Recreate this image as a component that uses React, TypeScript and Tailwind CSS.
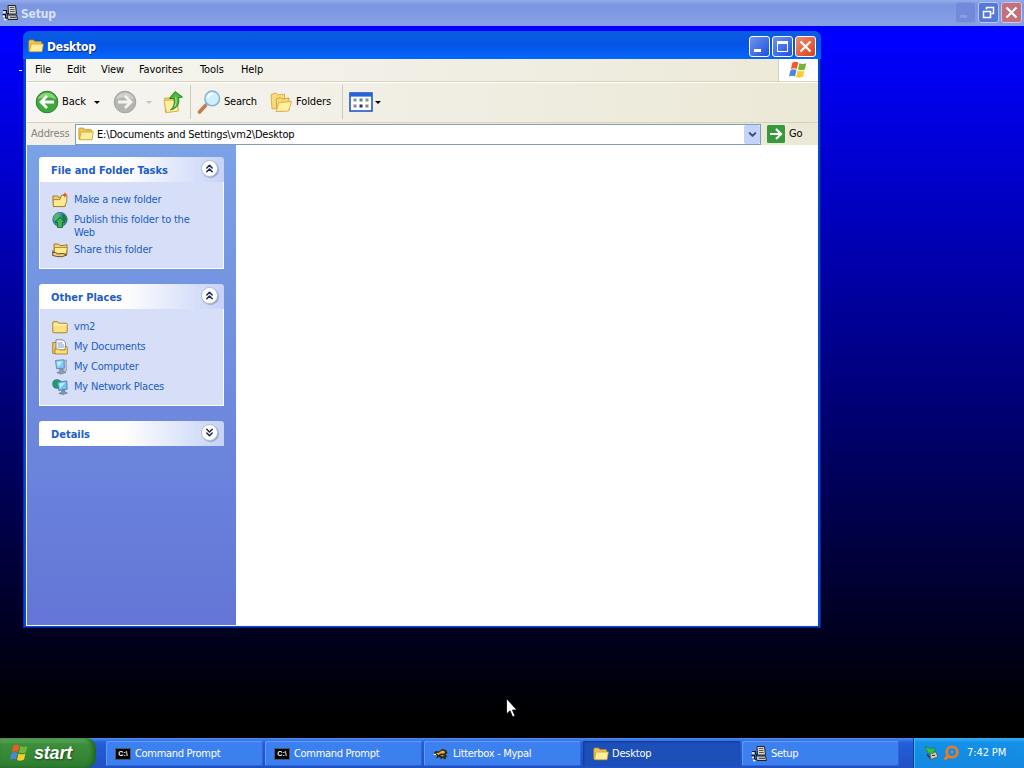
import type { ReactNode } from "react";
import { ChevronDown, ChevronsDown, ChevronsUp } from "lucide-react";

/* ---------- icons ---------- */

function FolderIcon({ className = "w-4 h-4" }: { className?: string }) {
    return (
        <svg viewBox="0 0 16 16" className={className}>
            <path d="M0.8 3.2Q0.8 2 2 2H5.5L7 3.6H12.5Q13.8 3.6 13.8 5V13.6H2Q0.8 13.6 0.8 12.5Z" fill="#f0c552" stroke="#b98a1c" strokeWidth="0.7" />
            <path d="M3 6H15.4L14 13.7H1.6Z" fill="#fdee9c" stroke="#c99a2c" strokeWidth="0.7" />
        </svg>
    );
}

function ClosedFolderIcon() {
    return (
        <svg viewBox="0 0 16 16" className="w-4 h-4">
            <path d="M0.8 4Q0.8 2.6 2 2.6H5.5L7 4.2H14Q15.2 4.2 15.2 5.5V12.6Q15.2 13.8 14 13.8H2Q0.8 13.8 0.8 12.6Z" fill="#fbe27c" stroke="#a37a1c" strokeWidth="0.9" />
            <path d="M1.4 6H14.6" stroke="#fff7c6" strokeWidth="1.2" />
        </svg>
    );
}

function WindowsFlag({ className = "w-5 h-5" }: { className?: string }) {
    return (
        <svg viewBox="0 0 20 18" className={className}>
            <path d="M3.4 1.8Q6.2 0 9.4 1.6L7.8 8Q4.8 6.6 1.8 8.2Z" fill="#ee5a2a" />
            <path d="M10.4 2.2Q13.4 3.8 17.4 2.2L15.8 8.4Q12.4 10 8.9 8.4Z" fill="#76b53c" />
            <path d="M1.5 9.2Q4.4 7.6 7.5 9.1L6 15.4Q3 14 0 15.6Z" fill="#4d86e0" />
            <path d="M8.6 9.5Q12 11.2 15.5 9.5L14 15.8Q10.4 17.4 7 15.9Z" fill="#f7cd2c" />
        </svg>
    );
}

function SetupIcon() {
    return (
        <svg viewBox="0 0 16 16" className="w-4 h-4 shrink-0">
            <path d="M6 0.5H13.5L14.5 9H6.5Z" fill="#d8d8d0" stroke="#222" />
            <path d="M7.8 2.5H12.2M7.8 4.5H12.5M8 6.5H12.7" stroke="#555" />
            <path d="M5 10H14.5L15.5 14.5H6Z" fill="#c8c8c8" stroke="#222" />
            <path d="M8 12.3H14" stroke="#333" />
            <path d="M1 5.5H4.5V8L6 9.5M0.5 9.5H3.5V12.5L5 14" fill="none" stroke="#111" strokeWidth="1.2" />
            <path d="M1 7H3.5M1 11.5H3M2 14.5H4.5" stroke="#fff" strokeWidth="1.3" />
        </svg>
    );
}

function CmdIcon() {
    return (
        <span className="flex w-4 h-3 shrink-0 items-center justify-center border border-[#4a5878] bg-black font-['Liberation_Sans'] text-[7px] leading-none font-bold tracking-normal text-white">
            C:\
        </span>
    );
}

function MypalIcon() {
    return (
        <svg viewBox="0 0 16 16" className="w-4 h-4 shrink-0">
            <path d="M0.5 7L3 5L6 5.5L9 3L13 4L14.5 7L12.5 8.5L14.5 11L12.5 11L13 13.5L9.5 12L8 13.5L7 11L3 12.5L4.5 9.5Z" fill="#2f2710" />
            <path d="M3 7L6 6.8L9 4.6L12 5.4L11.5 7.5H7.5L5.5 9Z" fill="#e4b83c" />
            <path d="M7 9L11.5 9.2L9.5 10.8Z" fill="#c8902c" />
            <path d="M0.5 8.5L3 8.2" stroke="#fff" />
        </svg>
    );
}

function NewFolderIcon() {
    return (
        <svg viewBox="0 0 16 16" className="w-4 h-4">
            <path d="M0.8 4H5.5L7 5.3H13V14.5H1.5Z" fill="#f3cf62" stroke="#8e641a" strokeWidth="0.8" />
            <path d="M9.5 3.2L15 4L14.6 10L12.6 14.6H1.3L1.2 7.6H8Z" fill="#fdea90" stroke="#9c7020" strokeWidth="0.8" />
            <path d="M13 0.3L13.8 2.1L15.9 2.9L13.8 3.8L13 5.8L12 3.8L10 2.9L12 2.1Z" fill="#e8532c" />
        </svg>
    );
}

function PublishIcon() {
    return (
        <svg viewBox="0 0 16 16" className="w-4 h-4">
            <circle cx="8" cy="7.5" r="7.2" fill="#3a92a4" stroke="#245f78" strokeWidth="0.7" />
            <path d="M2 4Q5 0.5 8 1.2L7 5L4 8.5L1.2 7.5Z" fill="#4fb86a" />
            <path d="M10 1.5Q14.5 3 14.8 8L12 10L10 6Z" fill="#1f7a45" />
            <path d="M8 5.5L13 10.4H10.4V15.6H5.6V10.4H3Z" fill="#3dbb50" stroke="#10562a" strokeWidth="0.8" />
        </svg>
    );
}

function ShareIcon() {
    return (
        <svg viewBox="0 0 16 16" className="w-4 h-4">
            <path d="M2 2H6.5L8 3.5H12L15 2.5V12H2Z" fill="#f5d264" stroke="#8e641a" strokeWidth="0.8" />
            <path d="M2.5 5.5H15.3L14 12H2.5Z" fill="#fdea90" stroke="#9c7020" strokeWidth="0.7" />
            <path d="M0.8 8.5V14M0.8 10.5Q4 10 6 12L11 11.5L14.8 13Q10 15.5 6 14.6L0.8 13.6" fill="#f0cf8a" stroke="#5b4218" strokeWidth="0.9" />
        </svg>
    );
}

function DocumentsIcon() {
    return (
        <svg viewBox="0 0 16 16" className="w-4 h-4">
            <path d="M0.7 3.5H4.5V14.5H0.7Z" fill="#f2c75a" stroke="#a0741e" strokeWidth="0.8" />
            <path d="M4 0.8H11L13.5 3.5V11H4Z" fill="#fff" stroke="#5f6f94" strokeWidth="0.8" />
            <path d="M5.5 4H10.5M5.5 6H12M5.5 8H12" stroke="#6a8fcf" strokeWidth="0.9" />
            <path d="M3 10H6.5L7.5 11H13.2V7L15.3 8V15H3Z" fill="#fbe07c" stroke="#a0741e" strokeWidth="0.8" />
        </svg>
    );
}

function ComputerIcon() {
    return (
        <svg viewBox="0 0 16 16" className="w-4 h-4">
            <path d="M10.5 1.5L14.5 1V12L11 14Z" fill="#b9c2d4" stroke="#7f8da8" strokeWidth="0.6" />
            <path d="M3.5 1.5L12 0.8L12.3 9L4.6 9.8Z" fill="#7fd0f4" stroke="#5f86b4" strokeWidth="0.9" />
            <path d="M5 3L10.8 2.3L6 7.8Z" fill="#c6effd" />
            <path d="M7.5 10L10.5 9.8L11 12L14 13.5L8.5 15.2L4.8 13.6L7.8 12.2Z" fill="#8f9bb2" stroke="#63708c" strokeWidth="0.5" />
        </svg>
    );
}

function NetworkIcon() {
    return (
        <svg viewBox="0 0 16 16" className="w-4 h-4">
            <circle cx="5" cy="5" r="4.8" fill="#2584b8" />
            <path d="M0.5 4Q3 -0.5 7 1L5.5 4L6 7L3.5 9Z" fill="#2c9a4b" />
            <path d="M5.5 3.2L14.8 2L15.2 10.2L6.8 11.4Z" fill="#6cc6f2" stroke="#5678a8" strokeWidth="0.9" />
            <path d="M7.2 4.4L13.3 3.6L8 9.4Z" fill="#bdeafc" />
            <path d="M9.5 11.2L12.5 11L13 13L15.5 14L11 15.6L6.8 14.4L9.8 13Z" fill="#8792aa" stroke="#59657f" strokeWidth="0.5" />
        </svg>
    );
}

function RoundArrow({ back, disabled }: { back?: boolean; disabled?: boolean }) {
    return (
        <svg viewBox="0 0 24 24" className="w-6 h-6 shrink-0">
            <circle cx="12" cy="12" r="10.8" fill={disabled ? "#b4b4b0" : "#3fa83a"} stroke={disabled ? "#a3a39f" : "#2c8230"} />
            <path d="M3 9.5A9.4 9.4 0 0 1 21 9.5Q12 5 3 9.5Z" fill={disabled ? "#cfcfcb" : "#8cd27e"} />
            <path
                d={back ? "M19 12H6.5M12 6L6 12L12 18" : "M5 12H17.5M12 6L18 12L12 18"}
                fill="none"
                stroke={disabled ? "#f3f3f0" : "#fff"}
                strokeWidth="2.8"
            />
        </svg>
    );
}

function UpFolderIcon() {
    return (
        <svg viewBox="0 0 22 24" className="w-[22px] h-6">
            <path d="M2.5 8H8L9.5 6H16V21L3.5 22.5Z" fill="#f2cf62" stroke="#d0a43a" strokeWidth="0.8" />
            <path d="M2 10.5L14 10L16.5 21L4.5 22.5Z" fill="#fdf0a0" stroke="#d5ad48" strokeWidth="0.8" />
            <path d="M8.5 20Q13.5 16 12 8.5H7.5L13 1.5L20.5 7L16.6 7.8Q18.5 17.5 8.5 20Z" fill="#4fb93c" stroke="#237a22" strokeWidth="0.9" />
            <path d="M13.6 7.2Q15 13 12.6 16.4" stroke="#a6e48c" strokeWidth="1.2" fill="none" />
        </svg>
    );
}

function SearchIcon() {
    return (
        <svg viewBox="0 0 24 24" className="w-6 h-6">
            <path d="M8.5 15.5L2.5 22" stroke="#c9784c" strokeWidth="3.6" strokeLinecap="round" />
            <path d="M10.5 12.8L8.5 15.2" stroke="#8fa2b8" strokeWidth="2.4" />
            <circle cx="15.2" cy="8.4" r="7.3" fill="#cdf0fb" stroke="#8db3d4" strokeWidth="1.6" />
            <path d="M11 8Q11.5 4 16 3.5" stroke="#fff" strokeWidth="1.8" fill="none" />
        </svg>
    );
}

function FoldersIcon() {
    return (
        <svg viewBox="0 0 22 22" className="w-[22px] h-[22px]">
            <path d="M1 3.5L6 2L8 4L14.5 3V16L2 18Z" fill="#f8db7c" stroke="#d8a83e" strokeWidth="0.9" />
            <path d="M6 8L10.5 6.5L12 8L19 7V19.5L7 20.5Z" fill="#f7d873" stroke="#d19e38" strokeWidth="0.9" />
            <path d="M9 11.5L21.5 10.5L18.5 20L6 20.5Z" fill="#fef1a4" stroke="#d9ad49" strokeWidth="0.9" />
        </svg>
    );
}

function ViewsIcon() {
    return (
        <svg viewBox="0 0 24 20" className="w-6 h-5">
            <rect x="1" y="1" width="22" height="18" fill="#fff" stroke="#2257c4" strokeWidth="1.6" />
            <rect x="1" y="1" width="22" height="3.6" fill="#2464d8" />
            <g fill="#7d93a6">
                <rect x="4.5" y="6.5" width="3" height="3" />
                <rect x="10.5" y="6.5" width="3" height="3" fill="#508c7a" />
                <rect x="16.5" y="6.5" width="3" height="3" />
                <rect x="4.5" y="12.5" width="3" height="3" fill="#8b7fb0" />
                <rect x="10.5" y="12.5" width="3" height="3" fill="#24364a" />
                <rect x="16.5" y="12.5" width="3" height="3" fill="#a27c6a" />
            </g>
        </svg>
    );
}

function Caret({ className = "border-t-black" }: { className?: string }) {
    return <span className={`w-0 h-0 border-x-[3px] border-x-transparent border-t-[3px] ${className}`} />;
}

/* ---------- window chrome ---------- */

function CaptionButton({ tone, children }: { tone: string; children: ReactNode }) {
    return (
        <button className={`flex w-[21px] h-[21px] items-center justify-center rounded-[3px] border ${tone}`}>
            <svg viewBox="0 0 19 19" className="w-[19px] h-[19px]" fill="none">
                {children}
            </svg>
        </button>
    );
}

const menus = [
    { label: "File", width: "w-[32px]" },
    { label: "Edit", width: "w-[34px]" },
    { label: "View", width: "w-[38px]" },
    { label: "Favorites", width: "w-[61px]" },
    { label: "Tools", width: "w-[41px]" },
    { label: "Help", width: "w-[40px]" },
];

function TaskPanel({ title, open, height, children }: { title: string; open?: boolean; height: string; children?: ReactNode }) {
    const Chevron = open ? ChevronsUp : ChevronsDown;
    return (
        <section className={`flex flex-col w-[185px] ${height}`}>
            <header className="flex h-[25px] shrink-0 items-center justify-between rounded-t-[3px] bg-linear-to-r/srgb from-white from-45% to-[#c6d3f7] pl-3 pr-[6px]">
                <h2 className="pt-[4px] text-[11px] font-bold text-[#215dc6]">{title}</h2>
                <span className="mb-[2px] flex w-[17px] h-[17px] items-center justify-center rounded-full border border-[#b4bdd2] bg-white text-[#1b2a4c] shadow-[1px_1px_1px_#9aa6c4]">
                    <Chevron className="w-[13px] h-[13px]" strokeWidth={2.8} />
                </span>
            </header>
            {open && <div className="flex-1 border border-t-0 border-white bg-[#d6dff7] pl-3 pt-[9px]">{children}</div>}
        </section>
    );
}

function TaskLink({ icon, tall, children }: { icon: ReactNode; tall?: boolean; children: ReactNode }) {
    return (
        <a className={`flex gap-[6px] text-[11px] leading-[13px] tracking-[-0.2px] text-[#215dc6] ${tall ? "h-[30px]" : "h-5"}`}>
            <span className="mt-[1px] shrink-0">{icon}</span>
            <span className="pt-[2px]">{children}</span>
        </a>
    );
}

function ExplorerWindow() {
    return (
        <div className="absolute left-[23px] top-[5px] flex h-[597px] w-[798px] flex-col rounded-t-[7px] bg-[#0846d8] px-[3px] pb-[2px] shadow-[inset_1px_0_#0a2fae,inset_-1px_-1px_#0a2390]">
            {/* Title bar */}
            <div className="-mx-[3px] flex h-7 shrink-0 items-center rounded-t-[7px] bg-linear-to-b/srgb from-[#0a5ee0] via-[#0554e6] to-[#0468fb] pl-[5px] pr-[5px] pt-[2px]">
                <FolderIcon />
                <span className="ml-[3px] mt-[1px] flex-1 text-[12px] font-bold tracking-[-0.2px] text-white [text-shadow:1px_1px_#0a2a80]">Desktop</span>
                <div className="flex gap-[2px]">
                    <CaptionButton tone="border-white bg-linear-to-br/srgb from-[#6d95f0] to-[#1f50dc]">
                        <path d="M4 13.5H11" stroke="#fff" strokeWidth="3" />
                    </CaptionButton>
                    <CaptionButton tone="border-white bg-linear-to-br/srgb from-[#6d95f0] to-[#1f50dc]">
                        <path d="M4.5 5V14.5H14.5V5" stroke="#fff" />
                        <path d="M4 5.5H15" stroke="#fff" strokeWidth="3" />
                    </CaptionButton>
                    <CaptionButton tone="border-white bg-linear-to-br/srgb from-[#ee8c70] to-[#d8401c]">
                        <path d="M4.5 4.5L14.5 14.5M14.5 4.5L4.5 14.5" stroke="#fff" strokeWidth="2.2" />
                    </CaptionButton>
                </div>
            </div>

            <div className="flex flex-1 flex-col border-l border-b border-[#f4f6fc]">
                {/* Menu bar */}
                <div className="flex h-[23px] shrink-0 border-b border-[#d8d2bd] bg-linear-to-r/srgb from-[#f6f5f1] to-[#ece9d8]">
                    <nav className="flex flex-1 items-center pl-2 pt-[1px] text-[11px] tracking-[-0.1px] text-black">
                        {menus.map((m) => (
                            <span key={m.label} className={m.width}>{m.label}</span>
                        ))}
                    </nav>
                    <div className="flex w-[40px] items-center justify-center border-l border-[#d8d2bd] bg-white">
                        <WindowsFlag className="w-5 h-[18px]" />
                    </div>
                </div>

                {/* Toolbar */}
                <div className="flex h-[41px] shrink-0 items-center border-t border-b border-t-white border-b-[#d8d2bd] bg-linear-to-r/srgb from-[#f6f5f1] to-[#ebe8d6] pb-[1px] pl-2 text-[11px] text-black">
                    <RoundArrow back />
                    <span className="ml-[3px] w-[32px] pt-[1px]">Back</span>
                    <Caret />
                    <span className="ml-[13px]"><RoundArrow disabled /></span>
                    <span className="ml-[9px] mr-[10px] flex"><Caret className="border-t-[#c8c5b8]" /></span>
                    <UpFolderIcon />
                    <span className="ml-[6px] mr-[6px] h-[34px] w-px bg-[#cfcab8]" />
                    <SearchIcon />
                    <span className="ml-[3px] w-[46px] pt-[1px] tracking-[-0.2px]">Search</span>
                    <FoldersIcon />
                    <span className="ml-[4px] w-[46px] pt-[1px] tracking-[-0.1px]">Folders</span>
                    <span className="mr-[6px] h-[34px] w-px bg-[#cfcab8]" />
                    <ViewsIcon />
                    <span className="ml-[2px] flex"><Caret /></span>
                </div>

                {/* Address bar */}
                <div className="flex h-[22px] shrink-0 items-center bg-linear-to-r/srgb from-[#f2f0e8] to-[#ebe8d6] pl-1 text-[11px] text-black">
                    <span className="w-[44px] pt-[1px] tracking-[-0.1px] text-[#85837a]">Address</span>
                    <div className="flex h-[21px] w-[686px] items-center border border-[#7f9db9] bg-white pl-[2px]">
                        <FolderIcon />
                        <span className="ml-[3px] flex-1 pt-[2px] tracking-[-0.18px]">E:\Documents and Settings\vm2\Desktop</span>
                        <span className="flex h-[19px] w-4 items-center justify-center rounded-[2px] bg-[#c3d3fb] text-[#34507c]">
                            <ChevronDown className="w-[11px] h-[11px]" strokeWidth={4.5} />
                        </span>
                    </div>
                    <svg viewBox="0 0 18 18" className="ml-[6px] w-[18px] h-[18px]">
                        <rect width="18" height="18" rx="1.5" fill="#37993a" />
                        <path d="M3 9H13.5M9 4L14 9L9 14" fill="none" stroke="#fff" strokeWidth="2.2" />
                    </svg>
                    <span className="ml-[4px] pt-[1px] tracking-[-0.2px]">Go</span>
                </div>

                {/* Content */}
                <div className="flex flex-1 bg-white">
                    <aside className="flex w-[209px] flex-col gap-[15px] bg-linear-to-b/srgb from-[#7ba2e7] to-[#6375d6] pl-3 pt-3">
                        <TaskPanel title="File and Folder Tasks" open height="h-[112px]">
                            <TaskLink icon={<NewFolderIcon />}>Make a new folder</TaskLink>
                            <TaskLink icon={<PublishIcon />} tall>Publish this folder to the<br />Web</TaskLink>
                            <TaskLink icon={<ShareIcon />}>Share this folder</TaskLink>
                        </TaskPanel>
                        <TaskPanel title="Other Places" open height="h-[122px]">
                            <TaskLink icon={<ClosedFolderIcon />}>vm2</TaskLink>
                            <TaskLink icon={<DocumentsIcon />}>My Documents</TaskLink>
                            <TaskLink icon={<ComputerIcon />}>My Computer</TaskLink>
                            <TaskLink icon={<NetworkIcon />}>My Network Places</TaskLink>
                        </TaskPanel>
                        <TaskPanel title="Details" height="h-[25px]" />
                    </aside>
                </div>
            </div>
        </div>
    );
}

/* ---------- taskbar ---------- */

const tasks = [
    { label: "Command Prompt", icon: <CmdIcon />, active: false },
    { label: "Command Prompt", icon: <CmdIcon />, active: false },
    { label: "Litterbox - Mypal", icon: <MypalIcon />, active: false },
    { label: "Desktop", icon: <FolderIcon className="w-4 h-4 shrink-0" />, active: true },
    { label: "Setup", icon: <SetupIcon />, active: false },
];

function Taskbar() {
    return (
        <footer className="flex h-[30px] shrink-0 bg-linear-to-b/srgb from-[#4a8bf4] via-[#245edb] via-15% to-[#1f50c4]">
            <button className="flex w-24 items-center rounded-r-[10px] bg-linear-to-b/srgb from-[#6cb56c] via-[#3c8f3c] via-20% to-[#2f7d2f] pl-[10px] shadow-[inset_-3px_0_4px_#1f6424]">
                <WindowsFlag className="w-5 h-[18px]" />
                <span className="ml-[4px] font-['Liberation_Sans'] text-[18px] leading-none font-bold italic tracking-[-0.2px] text-white [text-shadow:1px_1px_2px_#1c4a1c]">start</span>
            </button>
            <div className="flex flex-1 gap-[2px] pl-[10px] pt-[3px]">
                {tasks.map((t, i) => (
                    <div
                        key={i}
                        className={`flex h-[25px] w-[157px] items-center gap-[3px] rounded-[2px] text-[11px] tracking-[-0.4px] text-white ${
                            t.active
                                ? "bg-[#1c4fb8] pl-[10px] pt-[1px] shadow-[inset_1px_1px_2px_#123a90]"
                                : "bg-[#3c80f0] pl-[9px] shadow-[inset_1px_1px_#5f9bf8,inset_-1px_-1px_#2c66d4]"
                        }`}
                    >
                        {t.icon}
                        <span className={t.active ? "pt-[1px] tracking-[-0.2px]" : "ml-px pt-[1px] tracking-[-0.3px]"}>{t.label}</span>
                    </div>
                ))}
            </div>
            <div className="flex w-[111px] items-center border-l border-[#0d3c94] bg-linear-to-b/srgb from-[#35b0f4] via-[#1590e8] via-15% to-[#1488e0] pl-[10px] text-white shadow-[inset_1px_0_#3cb8f8]">
                <svg viewBox="0 0 16 16" className="w-4 h-4">
                    <path d="M6 7.5L12 7L14 12L6.5 14.5Z" fill="#cfcab0" stroke="#45505a" strokeWidth="0.8" />
                    <path d="M8 10.5L11 10.3" stroke="#333" />
                    <path d="M1 1.5L7 3.5L11.5 3L9 8.5L4 8Z" fill="#34c040" stroke="#177a2e" strokeWidth="0.6" />
                    <path d="M3 9L6 13" stroke="#26406a" strokeWidth="1.6" />
                </svg>
                <svg viewBox="0 0 16 16" className="ml-[3px] w-4 h-4">
                    <circle cx="9" cy="7" r="5.3" fill="none" stroke="#f07c1c" strokeWidth="2.6" />
                    <circle cx="9" cy="7" r="1.2" fill="#f07c1c" />
                    <path d="M5 11L1.5 14.5" stroke="#f07c1c" strokeWidth="2.8" />
                </svg>
                <span className="ml-[8px] pt-[1px] text-[11px] tracking-[-0.1px]">7:42 PM</span>
            </div>
        </footer>
    );
}

export default function App() {
    return (
        <div className="flex h-[768px] w-[1024px] flex-col overflow-hidden bg-black font-['DejaVu_Sans_Condensed','DejaVu_Sans',sans-serif] whitespace-nowrap select-none">
            {/* Setup window caption */}
            <header className="flex h-[26px] shrink-0 items-center bg-linear-to-b/srgb from-[#93acea] via-[#7b96e0] via-20% to-[#86a1e8] pr-[2px] pl-[2px]">
                <SetupIcon />
                <span className="ml-[3px] flex-1 pt-[1px] text-[12px] font-bold tracking-[-0.2px] text-[#d8e2f8]">Setup</span>
                <div className="mb-[1px] flex gap-[2px]">
                    <CaptionButton tone="border-[#8399e0] bg-[#7389da]">
                        <path d="M4 13.5H11" stroke="#8a9ee2" strokeWidth="3" />
                    </CaptionButton>
                    <CaptionButton tone="border-[#b4c6f4] bg-[#5577dc]">
                        <path d="M7.5 6.5V4.5H14.5V10.5H12.5M4.5 8.5H11.5V14.5H4.5Z" stroke="#fff" strokeWidth="1.5" />
                    </CaptionButton>
                    <CaptionButton tone="border-[#d0c4e4] bg-[#c2707c]">
                        <path d="M4.5 4.5L14.5 14.5M14.5 4.5L4.5 14.5" stroke="#fff" strokeWidth="2.2" />
                    </CaptionButton>
                </div>
            </header>

            {/* Backdrop */}
            <main className="relative flex-1 bg-linear-to-b/srgb from-[#0000ff] from-2% to-black to-97%">
                <span className="absolute left-[19px] top-[44px] h-px w-[3px] bg-white" />
                <ExplorerWindow />
                <svg viewBox="0 0 12 20" className="absolute left-[506px] top-[672px] h-5 w-3">
                    <path d="M0.5 0.5V16L4 12.8L6.6 19L9 18L6.5 12H11Z" fill="#fff" stroke="#000" strokeWidth="0.8" />
                </svg>
            </main>

            <Taskbar />
        </div>
    );
}
